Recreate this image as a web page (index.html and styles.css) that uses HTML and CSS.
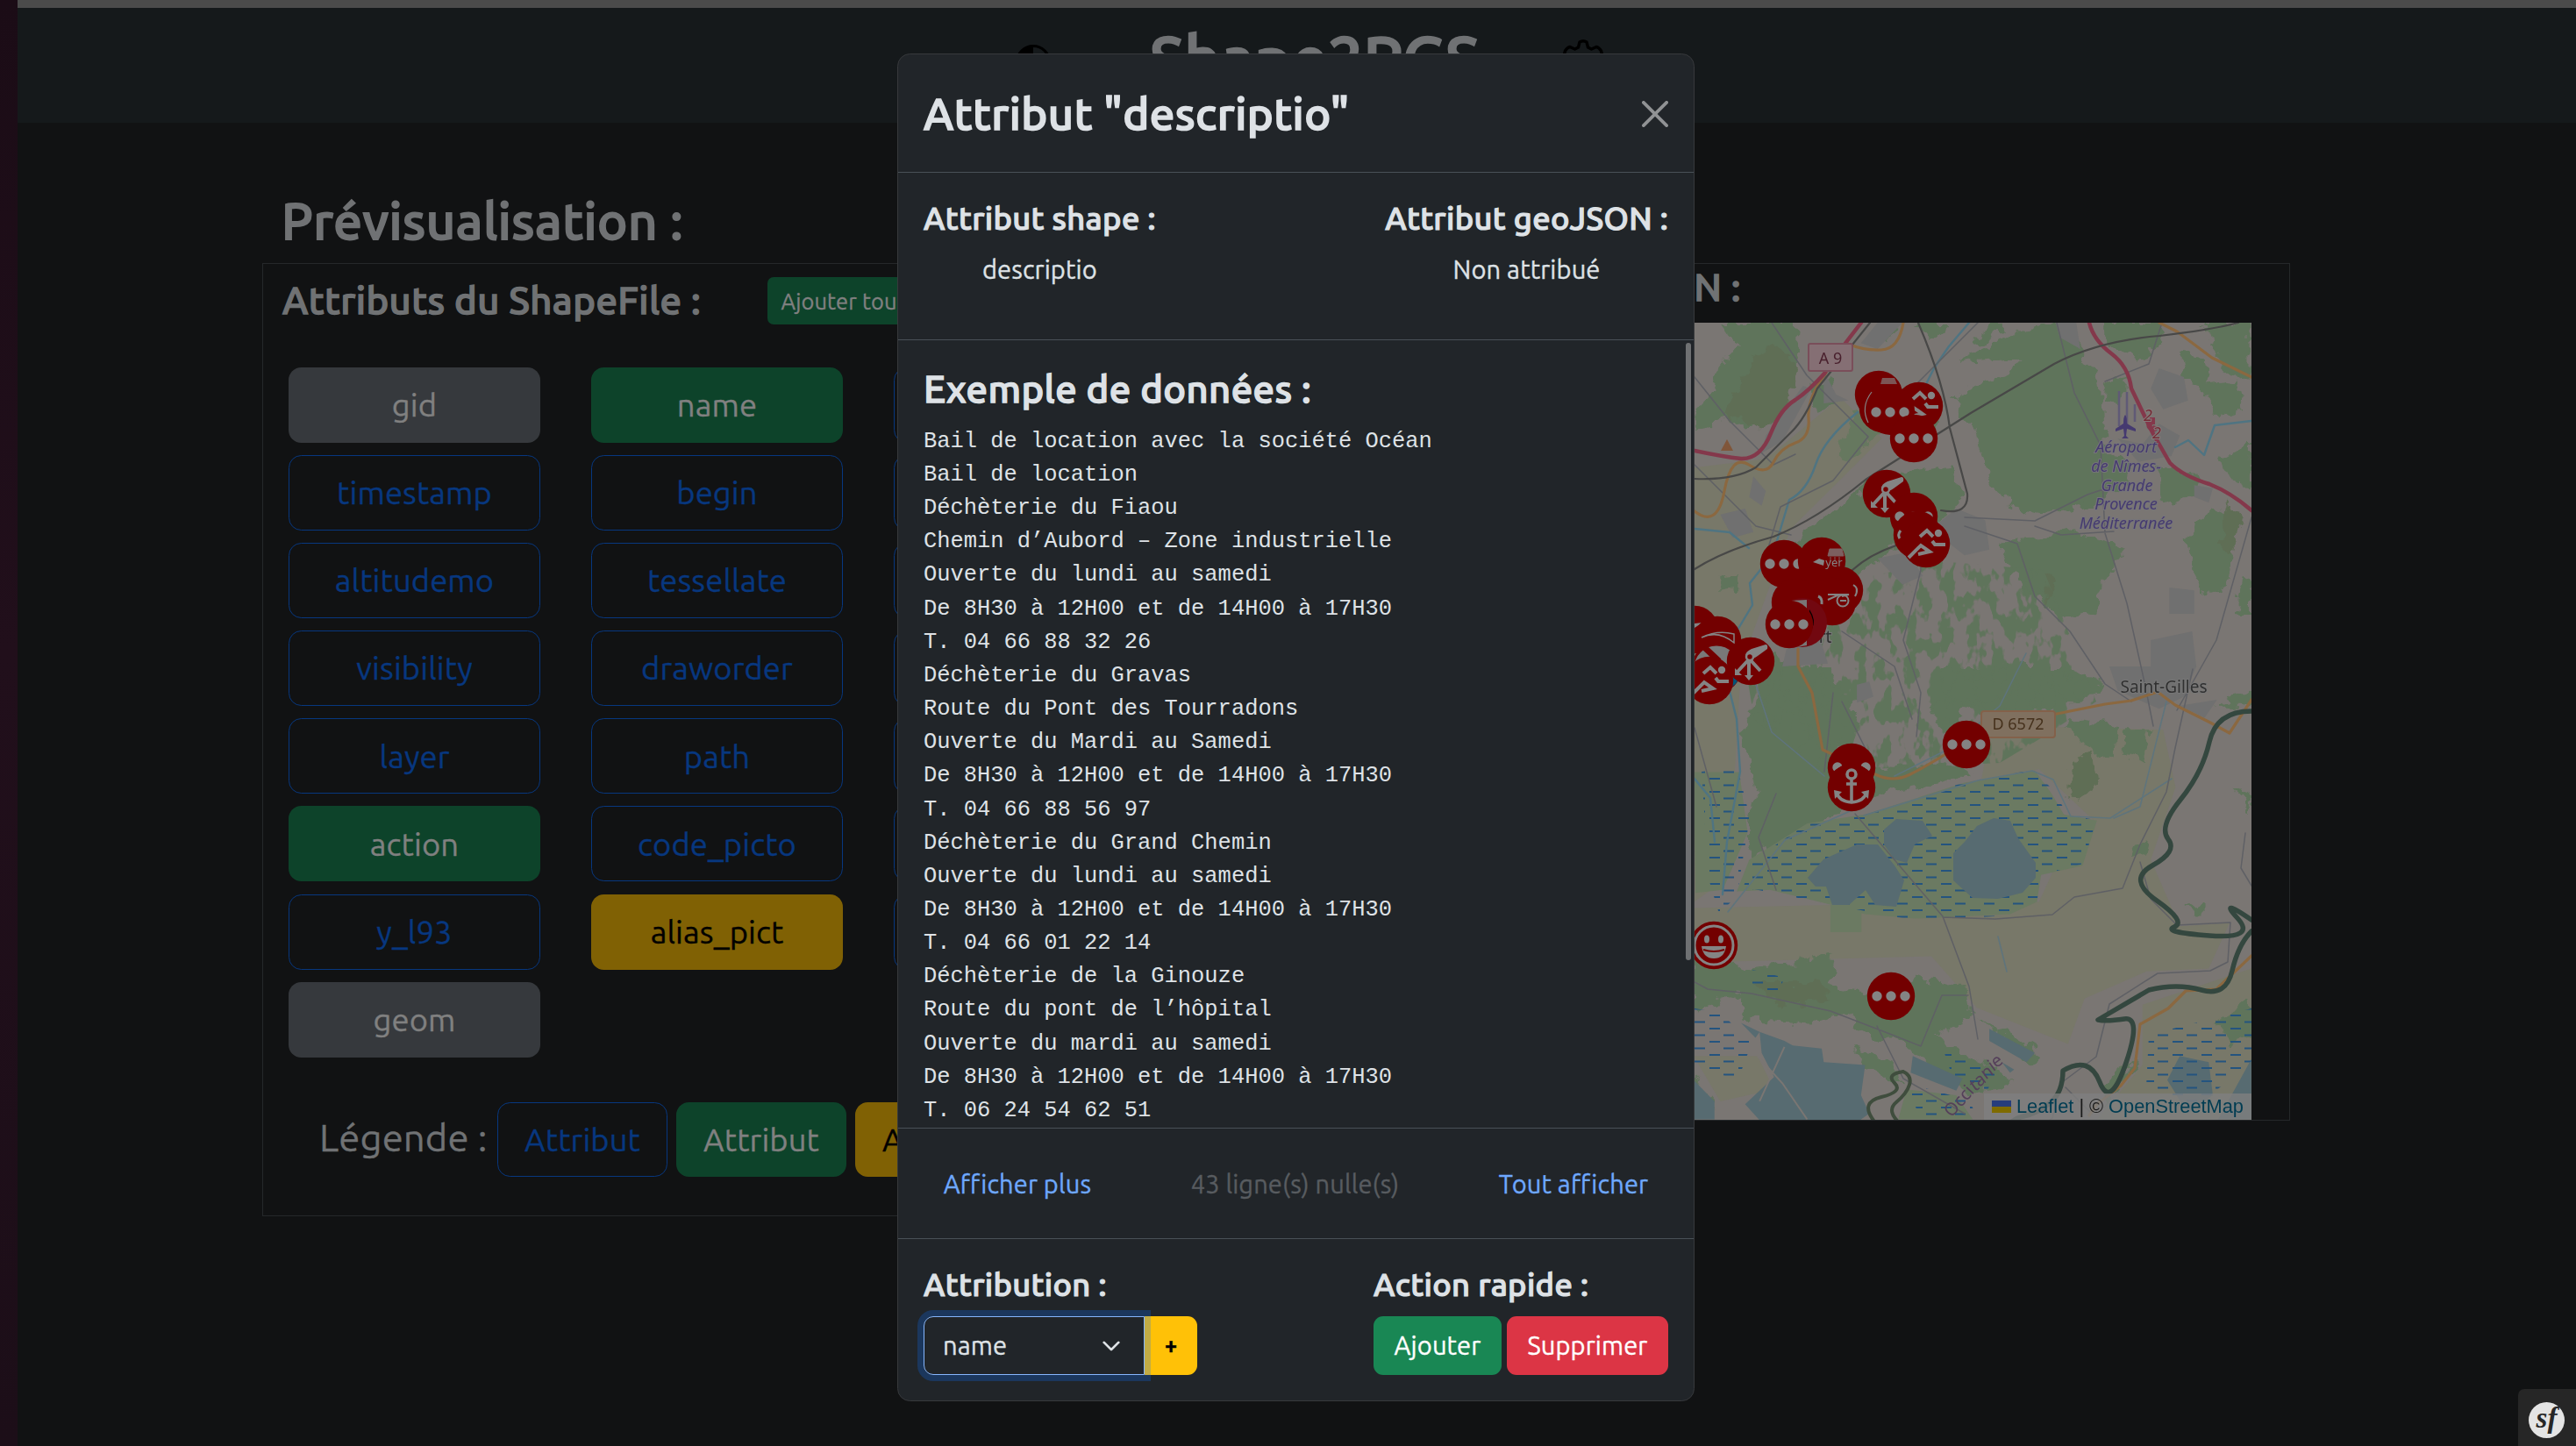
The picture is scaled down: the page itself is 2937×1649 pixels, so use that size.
FILE: index.html
```html
<!DOCTYPE html>
<html lang="fr">
<head>
<meta charset="utf-8">
<title>Shape2PGS</title>
<link rel="stylesheet" href="styles.css">
</head>
<body>
<div class="strip"></div>
<div class="app">
  <div class="topline"></div>
  <header class="header">
    <svg class="icon-theme" viewBox="0 0 40 40"><circle cx="20" cy="20" r="18.5" fill="#15191b" stroke="#000" stroke-width="3"/><path d="M20 1.500A18.500 18.500 0 0 0 20 38.500Z"/></svg>
    <h1>Shape2PGS</h1>
    <svg class="icon-gear" viewBox="0 0 48 52" fill="none" stroke="#000" stroke-width="3.400" stroke-linejoin="round"><path d="M20 3q4-2.500 8 0l1.500 6 4 2 5.500-2.500q3 .5 5.500 4.500l1 4-4.500 5v6l4.500 4.500-1 4.500q-2.500 4-5.500 4.500l-5.500-2-4 2-1.500 6q-4 2.500-8 0l-1.500-6-4-2-5.500 2q-3-.5-5.500-4.500l-1-4.500 4.500-4.500v-6l-4.500-5 1-4q2.500-4 5.500-4.500l5.500 2.500 4-2z"/><circle cx="24" cy="25" r="7"/></svg>
  </header>
  <main>
    <h2>Prévisualisation :</h2>
    <div class="columns">
      <section class="panel panel-left">
        <div class="panel-head"><h3>Attributs du ShapeFile :</h3><button class="btn btn-sm green-dim">Ajouter tous</button></div>
        <div class="grid">
          <button class="btn btn-lg gray-dim">gid</button><button class="btn btn-lg green-dim">name</button><button class="btn btn-lg outline"></button>
          <button class="btn btn-lg outline">timestamp</button><button class="btn btn-lg outline">begin</button><button class="btn btn-lg outline"></button>
          <button class="btn btn-lg outline">altitudemo</button><button class="btn btn-lg outline">tessellate</button><button class="btn btn-lg outline"></button>
          <button class="btn btn-lg outline">visibility</button><button class="btn btn-lg outline">draworder</button><button class="btn btn-lg outline"></button>
          <button class="btn btn-lg outline">layer</button><button class="btn btn-lg outline">path</button><button class="btn btn-lg outline"></button>
          <button class="btn btn-lg green-dim">action</button><button class="btn btn-lg outline">code_picto</button><button class="btn btn-lg outline"></button>
          <button class="btn btn-lg outline">y_l93</button><button class="btn btn-lg yellow-dim">alias_pict</button><button class="btn btn-lg outline"></button>
          <button class="btn btn-lg gray-dim">geom</button>
        </div>
        <div class="legend"><span>Légende :</span><button class="btn btn-lg outline">Attribut</button><button class="btn btn-lg green-dim">Attribut</button><button class="btn btn-lg yellow-dim">Attribut</button></div>
      </section>
      <section class="panel panel-right">
        <h3>GeoJSON :</h3>
        <div class="map">
          <svg viewBox="1932 368 635 909">
            <defs>
              <filter id="rough" color-interpolation-filters="sRGB" x="-5%" y="-5%" width="110%" height="110%"><feTurbulence type="fractalNoise" baseFrequency="0.060" numOctaves="3" seed="4"/><feDisplacementMap in="SourceGraphic" scale="22" xChannelSelector="R" yChannelSelector="G"/></filter>
              <filter id="speckle" color-interpolation-filters="sRGB" x="0" y="0" width="100%" height="100%"><feTurbulence type="fractalNoise" baseFrequency="0.070 0.040" numOctaves="3" seed="11"/><feColorMatrix values="0 0 0 0 .373  0 0 0 0 .455  0 0 0 0 .357  0 14 0 0 -6.900"/><feComposite in2="SourceGraphic" operator="in"/></filter>
              <pattern id="marsh" width="33" height="15" patternUnits="userSpaceOnUse"><path d="M2 3h12M18 10.500h12" stroke="#24547f" stroke-width="2.200"/></pattern>
              <g id="pin"><circle r="27.200" fill="#730000"/></g>
              <g id="dots"><circle r="27.200" fill="#730000"/><g fill="#848484"><circle cx="-16" r="5.700"/><circle r="5.700"/><circle cx="16" r="5.700"/></g></g>
              <g id="run"><circle r="27.200" fill="#730000"/><g fill="none" stroke="#848484" stroke-width="4"><path d="M-7-8l8-7 7 7M22 1H10l-3-4M-20 16L-6 2l10 7-13 3"/></g><circle cx="14" cy="-12" r="4.200" fill="#848484"/></g>
              <g id="tool"><circle r="27.200" fill="#730000"/><path d="M-6-6q0-5 7-8l16-5q3 0 2 5l-11 8q-6 5-11 2z" fill="#848484"/><circle cx="-1" cy="-5" r="4" fill="#730000" stroke="#848484" stroke-width="2.500"/><path d="M-3-1l-12 13M-2 0v18M0-1l11 12" stroke="#848484" stroke-width="4"/><path d="M-18 8v8h8zM-7 16h10l-5 6z" fill="#848484"/></g>
            </defs>
            <rect x="1932" y="368" width="635" height="909" fill="#7a7673"/>
            <g transform="translate(1900 240) scale(.47194 .33333)">
              <path fill="#787869" d="M66 880L240 850 420 640 520 780 300 1090 220 1400 180 1560H66ZM740 620L860 600 850 690 780 720ZM920 630l70-10 10 60-60 15z"/>
            </g>
            <g transform="translate(1900 760) scale(.47194 .34439)">
              <path fill="#787869" d="M66 0H180L150 700 66 780ZM780 240L940 200 1200 210 1230 400 1170 640 1240 860 1360 850 1310 1000 1160 1010 1010 1100 970 1250 750 1130 640 960 66 980V800L400 790 900 780 940 660 1040 520 900 340 760 380ZM66 1290L220 1290 260 1400 130 1440ZM1150 1120l263-120v500H1040l110-180z"/>
            </g>
            <g filter="url(#rough)" fill="#5f745b">
              <g transform="translate(1900 240) scale(.47194 .33333)">
                <path d="M130 384H290L330 450 300 560 240 700 190 750 150 700 80 760 66 690 120 610 130 540 170 470ZM520 384H560L540 450 500 440ZM600 384H690L640 450ZM700 520l90-60 90-70 70 10 70 130 30 60 10 240 60 40-10 60-70 80-140 30-70-30-50-90-30-170-60-100 50-50 90-40 20-60zM590 900L690 880 715 1000 650 1050 600 1020ZM330 1100L520 900 660 880 640 1100 560 1150 430 1270 300 1200ZM800 1140L990 1090 1060 1130 1110 1160 1060 1260 1030 1380 960 1400 920 1340 870 1310ZM1060 384h120l20 60-60 60-80-40zM1300 384h110v200l-60-30zM1240 490l60 10 10 110-60-30zM1340 850l73-60v170l-60-50zM1260 1130l60-110 60 30-20 230-60 30-30-80zM1290 600l90-20 20 100-60 20zM1070 560l40 20-10 90-40-20zM1390 1250l23 20v120l-40-10zM350 600l50-20 10 80-50 20zM130 1260l40-10v50l-40 10zM740 440l60-60 20 30-60 50zM1180 880l90 10 20 80-90 40zM560 640l90 90-10 60-60-30z"/>
                <path d="M240 610q60 20 70 60-60-10-80 80l-30-30zM450 680l60 80-60 100-40-20z" fill="#66785f"/>
              </g>
              <g transform="translate(1900 760) scale(.47194 .34439)">
                <path d="M210 0H400L440 100 470 210 400 300 480 330 700 330 740 360 500 430 390 500 290 570 215 640 190 560 215 400 180 200 225 100ZM660 0H950L1040 90 960 140 800 160 720 130 690 230 640 180ZM830 0h130l100 60-60 60-140-10zM1370 90l43-10v50h-80zM1000 170l90 20-10 90-40 20-70-100zM1110 210h60l-20 110-40-30zM1370 400l43 20v60zM1130 580l40-10-10 50-40 10zM66 960L200 1000 410 960 400 1060 480 1080 600 1030 730 1060 740 1170 620 1240 500 1230 430 1150 350 1180 190 1170 180 1080 66 1140ZM450 1260l90 50 30 70-80-40zM500 1190L650 1230 840 1370 750 1420 600 1290ZM750 1160l160 130-30 30zM1260 790l40-10v40h-30zM1330 1170l83-60v120l-60 20zM1080 1330l60-20-90 150zM66 1360l60 110-60-10z"/>
              </g>
              <g fill="#5f6e55"><path d="M2000 405l24-15 24 30-10 50-30 20-40-20zM2540 570l14 20-8 40-14-10zM2365 870l20-12 5 40-20 15-16-10zM2330 655l14 12-8 20-10-10z"/><path d="M2000 1120h70l20 20-60 10z"/></g>
            </g>
            <path filter="url(#speckle)" d="M2120 660l90-20 120 10 60 150-60 40-50 30-210 10-70-60-10-60 60-30z"/>
            <g transform="translate(1900 240) scale(.47194 .33333)" fill="#707070">
              <path d="M510 384h60l-60 90-40-20zM330 600l20 10-70 180-50 40 10-60zM380 550l30 80 30 20-60 10zM1190 540l60 30 10 80-60 30-30-70zM940 384h50l10 90-50-40zM1090 780l60 20 40-70 50 40-20 70-80 20zM700 1020l70 40 10 100-60 20-80-90zM130 1040l60-20 20 80-50 20zM210 910l30 50-10 50-30-30zM510 1190l70-20 40 80-50 30zM290 1500l80-40 20 90-110 10zM1170 1470l100-30 10 120h-110zM1275 940l45 10-10 50-35-20zM1215 1290l60 10v80h-60z"/>
            </g>
            <g transform="translate(1900 760) scale(.47194 .34439)">
              <path fill="#707070" d="M1070 0h210l-30 100-60 40-100-60zM1240 130l90-20-30 60zM460 60l30-10 10 50-40 20z"/>
              <path fill="#6b7a62" d="M480 490L720 385 890 345 930 420 960 490 1040 510 1005 660 905 690 895 780 830 820 600 835 480 820 400 790 250 740 170 745 200 640 340 520ZM396 790h75v90h-75zM66 350l110 0 20 200-60 190-66 10zM580 1400l120 20 40 80H560z"/>
              <path fill="#576b71" d="M225 1210l60 30 20 15 70 10 5 45 100 10-10 100 20 60-30 30H230L190 1450l70-90-30-80zM595 1290l120 75-15 40-110-60zM780 1200l110 80-20 30-90-70zM180 1180l45 30-10 20zM810 1310l30 25-10 10zM1210 1370l30-80 70 20 10 110-60 60zM1413 1300v200h-80zM66 1370l50 70 0 60H66z"/>
              <path d="M220 1290l60 90 60 120M285 1260l-60 180" stroke="#7a7673" stroke-width="2" fill="none" vector-effect="non-scaling-stroke"/>
            </g>
            <path fill="url(#marsh)" d="M2125 930L2240 892 2318 878 2340 900 2358 930 2390 935 2375 985 2327 998 2322 1030 2290 1044 2185 1050 2090 1032 2000 1014 1985 1018 2000 980 2060 940ZM1940 880l40-8 15 60-15 90-20 20-12-40zM1932 1150l30 5 35 35-15 40-50-10zM1995 1105l40 10-10 20-30-5zM2175 1235l70 20 20 40h-70zM2215 1195l60 30-10 20-40-20zM2450 1180l117-30v60l-60 50-60-20z"/>
            <path fill="#576b71" d="M2061 1001L2079 980 2117 963 2141 963 2160 987 2171 1004 2162 1034 2138 1032 2127 1015 2108 1032 2089 1032 2082 1011 2070 1011ZM2148 946L2162 934 2192 936 2203 953 2183 963 2174 984 2160 980 2148 963ZM2227 973L2240 960 2254 942 2273 933 2292 936 2301 956 2321 984 2321 1001 2306 1018 2278 1025 2249 1024 2227 1004Z"/>
            <g fill="none" stroke-linecap="round" stroke-linejoin="round">
              <g stroke="#4f7482" stroke-width="2.400"><path d="M2245 368L2222 395 2205 420 2195 440M2118 470Q2080 500 2070 530T2040 570L2025 620 2015 640 1995 665 1998 690 1980 720M1932 603l40 4 22 18M2480 510l15-8 18 17 12-34 42-5M1970 780l10 40 4 60-15 80-5 60M1932 888l18 22 5 50"/></g>
              <g stroke="#5f747c" stroke-width="1.600"><path d="M2125 930l130-40 62-11 24 10 20 42 45 2 70-45M2470 800l-30 120-30 13M2125 918l-90 40-65 82M2080 885l-60-50-20-60M2160 885l60-30 60-50 30-60M2278 1068l10 40"/></g>
              <g stroke="#5f6065" stroke-width="1.500"><path d="M1932 430l40 50 30 30 20 20 25-12M2020 368l40 60 60 60 10 10-40 50-60 30-15 50M2130 430l20 40 40 20M2255 368l-60 60-60 60M2345 368l20 80 30 60 5 100 25 80 20 90 10 50M2400 435l50-20 15-47M2240 590l80 4 60-30 30-10M2320 600l30 10 60-4M2240 600l60 20 20 60 40 40 40 60 30 20M2190 610l0 40-20 80 20 60-5 50M1932 530l70 70 40 10M2567 590l-40 140-45 80M2100 720l60 40 20 60M2100 800l30 60M1932 1120l15 8 50 5 90 20 65 25 38 15 24-58h30M2115 928l100 117 30 80 10 60M2215 1046l60 2 65-5 25-20 55-10 20-50 30-60 10-50 20-90M2440 983l12 42 30 30 61-3-3 45-20 10-60 3-55 35-15 60-40 30-10 40-40 30M2140 1170l30 60 70 40M2025 905l-20 50 20 60M1932 830l25 90M2560 950l-5 40 12 20M2090 790l-10 90M2355 1240l30 30"/></g>
              <g stroke="#8b6840" stroke-width="3.200"><path d="M2170 368q-5 30-25 31T2107 392M2082 425q-22 30-20 52t-15 28-25 22-28 3-28 30-34 23M2462 368l20 10 40 30 45 22M2050 740l0 20 16 30 12 65 60 28q20 10 40 0t55-32 25-13M2340 815l60-12 30-4 30-10 20 15 40 20 22 12 25-38M2567 1090l-40 38-35 2-20 20-32 18-6 50-16 20-28 22-8 12"/></g>
              <path d="M2122 368l-20 26q-12 15-22 32-18 20-33 30-17 10-28 38-12 30-34 29-20-2-53-9M2382 368q5 20 25 35t23 40l24 50 20 35q15 15 45 24 25 10 48 30" stroke="#84384b" stroke-width="4.500"/>
              <path d="M2132 368l-60 75q-14 35-30 50-20 20-40 40-25 15-70 13M1932 649q35-22 90-37 50-20 105-65l120-76 95-56q50-26 120-32 60-7 90-15M2187 368q30 70 36 120l20 75q2 25-30 19M2162 622q-30 10-50 28l-25 22" stroke="#484847" stroke-width="2.200"/>
              <path d="M2567 811q-40 0-48 35t-33 66-14 45-18 30 5 40 20 30 40 10 32-20 16 2M2567 1062q-15 15-22 45t-35 22-60 0l-58 34q10 2 30-1t2 50-30 22-42-13q0 25-15 37t-30 15-35 27l-35 7" stroke="#34473f" stroke-width="5.500"/>
              <path d="M2170 1222q10 5 7 15t-15 20 5 25M2170 1222q-20 3-10 13t-15 16-8 28" stroke="#3f4d3d" stroke-width="4"/>
            </g>
            <path fill="#80563a" d="M1962 514l7-13 7 13z"/>
            <path d="M2416 446v40m9-39v39m9-25v20" stroke="#605a76" stroke-width="2.500"/>
            <path fill="#453a70" d="M2423 473q2 2 2 10l10 6v3l-10-3-1 8 3 3h-8l3-3-1-8-9 3v-3l9-6q0-8 2-10z"/>
            <path d="M2454 481q-6 3-2 7t6-2M2454 476v8" stroke="#84384b" stroke-width="6" fill="none"/>
            <g class="map-small"><text x="2449" y="480">2</text><text x="2459" y="500">2</text></g>
            <g class="airport"><text x="2424" y="516">Aéroport</text><text x="2424" y="538">de Nîmes-</text><text x="2425" y="560">Grande</text><text x="2424" y="581">Provence</text><text x="2424" y="603">Méditerranée</text></g>
            <rect x="2062" y="392" width="50" height="31" rx="2" fill="#856f74" stroke="#7a4e5a" stroke-width="2"/>
            <text class="road-a" x="2087" y="415">A 9</text>
            <rect x="2259" y="811" width="84" height="30" rx="3" fill="#80705f" stroke="#83614a" stroke-width="2"/>
            <text class="road-d" x="2301" y="832">D 6572</text>
            <text class="town" x="2467" y="790">Saint-Gilles</text>
            <text class="town" x="2081" y="733">rt</text>
            <text class="region" transform="translate(2225 1275) rotate(-48)">Occi<tspan rotate="12">tanie</tspan></text>
            <use href="#pin" x="2142" y="450"/><path d="M2144 438l2-7h14l3 7z" fill="#7c5555"/><use href="#pin" x="2147" y="466"/><use href="#run" x="2188" y="463"/><circle cx="2155" cy="468" r="28" fill="#730000"/><path d="M2134 447q-13 17-4 35" fill="none" stroke="#848484" stroke-width="1.200"/><g fill="#848484"><circle cx="2139" cy="470" r="5.700"/><circle cx="2155" cy="470" r="5.700"/><circle cx="2171" cy="470" r="5.700"/></g>
            <use href="#dots" x="2182" y="500"/>
            <use href="#tool" x="2151" y="563"/><use href="#dots" x="2182" y="589"/><circle cx="2186" cy="610" r="27.200" fill="#730000"/><path d="M2167 605q-4 5-1 9" stroke="#848484" stroke-width="3" fill="none"/><use href="#run" x="2196" y="620"/>
            <use href="#dots" x="2034" y="643"/><use href="#pin" x="2077" y="640"/><path d="M2086 626h14l2 8h-18zM2087 635v5m5-5v5m5-5v5" fill="#7c6060" stroke="#7c6060"/><path d="M2067 641l7-4 6 2-1 6z" fill="#848484"/><text class="pin-text" x="2091" y="646">yer</text>
            <circle cx="2062" cy="678" r="31" fill="#730000"/><use href="#pin" x="2097" y="673"/><use href="#pin" x="2089" y="686"/><path d="M2113 667q7 4 2 13M2084 678h24l-8 2M2084 684l13-6" stroke="#848484" stroke-width="2" fill="none"/><circle cx="2101" cy="685" r="6.500" fill="none" stroke="#848484" stroke-width="2"/><path d="M2098 685h7" stroke="#848484" stroke-width="2"/>
            <use href="#pin" x="2047" y="687"/><circle cx="2055" cy="710" r="28" fill="#720810"/><path d="M2060 684v52l-18 3v-54z" fill="#797676"/><path d="M2063 695q8 12 3 22l-5 2z" fill="#000"/><path d="M2073 680q5 2 4 9" stroke="#848484" stroke-width="3"/><use href="#dots" x="2040" y="712"/>
            <use href="#pin" x="1932" y="718"/><path d="M1932 711l9-1-9 6z" fill="#848484"/><use href="#pin" x="1958" y="730"/><path d="M1940 727q18-9 37-4v10q-18-15-37-6" stroke="#848484" stroke-width="1.500" fill="none"/><circle cx="1957" cy="762" r="27" fill="#797979" stroke="#730000" stroke-width="3"/><path d="M1976 768l8-3q0 12-9 18z" fill="#005478"/><path d="M1943 738l17 16" stroke="#730000" stroke-width="7"/><use href="#tool" x="1996" y="754"/><use href="#run" x="1949" y="776"/>
            <use href="#dots" x="2242" y="849"/>
            <use href="#dots" x="2111" y="875"/><path d="M2100 868h22v20h-22z" fill="#730000"/><use href="#pin" x="2111" y="898"/><g fill="none" stroke="#848484" stroke-width="3.600"><circle cx="2111" cy="883" r="5"/><path d="M2111 888v27M2105 894h12M2094 904q3 10 17 11 14-1 17-11"/></g><path d="M2091 901l9 2-8 8zM2131 901l-9 2 8 8zM2092 878q-1-6 4-7l4 2zM2130 878q1-6-4-7l-4 2z" fill="#848484"/>
            <use href="#pin" x="1954" y="1078"/><circle cx="1954" cy="1078" r="22" fill="none" stroke="#848484" stroke-width="3"/><path d="M1940 1079h28q-2 14-14 14t-14-14z" fill="#848484"/><path d="M1942 1083q12 4 24 0" stroke="#730000" stroke-width="2" fill="none"/><g fill="#848484"><ellipse cx="1946" cy="1071" rx="3" ry="4.500"/><ellipse cx="1962" cy="1071" rx="3" ry="4.500"/></g>
            <use href="#dots" x="2156" y="1136"/>
          </svg>
          <div class="attribution"><i class="flag"></i><a>Leaflet</a><span>|</span><span>©</span><a>OpenStreetMap</a></div>
        </div>
      </section>
    </div>
  </main>
</div>

<div class="modal">
  <div class="modal-header"><h4>Attribut "descriptio"</h4><svg class="close" viewBox="0 0 16 16" fill="#909294"><path d="M.293.293a1 1 0 0 1 1.414 0L8 6.586 14.293.293a1 1 0 1 1 1.414 1.414L9.414 8l6.293 6.293a1 1 0 0 1-1.414 1.414L8 9.414l-6.293 6.293a1 1 0 0 1-1.414-1.414L6.586 8 .293 1.707a1 1 0 0 1 0-1.414z"/></svg></div>
  <div class="modal-row names">
    <div><h5>Attribut shape :</h5><p>descriptio</p></div>
    <div><h5>Attribut geoJSON :</h5><p>Non attribué</p></div>
  </div>
  <div class="modal-data">
    <h3>Exemple de données :</h3>
<pre>Bail de location avec la société Océan
Bail de location
Déchèterie du Fiaou
Chemin d’Aubord – Zone industrielle
Ouverte du lundi au samedi
De 8H30 à 12H00 et de 14H00 à 17H30
T. 04 66 88 32 26
Déchèterie du Gravas
Route du Pont des Tourradons
Ouverte du Mardi au Samedi
De 8H30 à 12H00 et de 14H00 à 17H30
T. 04 66 88 56 97
Déchèterie du Grand Chemin
Ouverte du lundi au samedi
De 8H30 à 12H00 et de 14H00 à 17H30
T. 04 66 01 22 14
Déchèterie de la Ginouze
Route du pont de l’hôpital
Ouverte du mardi au samedi
De 8H30 à 12H00 et de 14H00 à 17H30
T. 06 24 54 62 51</pre>
    <div class="thumb"></div>
  </div>
  <div class="modal-row more"><button class="btn link">Afficher plus</button><span>43 ligne(s) nulle(s)</span><button class="btn link">Tout afficher</button></div>
  <div class="modal-row actions">
    <div><h5>Attribution :</h5><div class="group"><div class="select"><span>name</span><svg viewBox="0 0 16 16" fill="none" stroke="#dee2e6" stroke-width="2" stroke-linecap="round" stroke-linejoin="round"><path d="m2 5 6 6 6-6"/></svg></div><button class="btn plus">+</button></div></div>
    <div><h5>Action rapide :</h5><div class="group spaced"><button class="btn green">Ajouter</button><button class="btn red">Supprimer</button></div></div>
  </div>
</div>
<div class="toolbar"><div class="sf">sf</div></div>
</body>
</html>
```
FILE: styles.css
```css
* { box-sizing: border-box; }
html, body { margin: 0; height: 1649px; overflow: hidden; }
body { position: relative; display: flex; background: #111213; color: #707274; font: 400 29.07px/1.5 Ubuntu, "Noto Sans", sans-serif; letter-spacing: .004em; -webkit-text-stroke: .012em; }
svg, .attribution, pre { -webkit-text-stroke: 0; letter-spacing: 0; }
h1, h2, h3, h4, h5, p, pre { margin: 0; }
h1, h2, h3, h4, h5 { font-weight: 500; line-height: 1.2; letter-spacing: .009em; -webkit-text-stroke: .032em; }
.strip { width: 20px; background: linear-gradient(#1b0c16, #210f1b 45%, #1c0e18); }
.app { flex: 1; }
.topline { height: 9px; background: #4b4b4b; }
.header { height: 131px; background: #15191b; display: flex; align-items: flex-start; padding: 15px 0 0 1138px; }
h1 { font-size: 72.67px; width: 373px; margin: 0 97px 0 113px; white-space: nowrap; letter-spacing: -.002em; }
.icon-theme { width: 40px; height: 40px; margin-top: 27px; }
.icon-gear { width: 48px; height: 52px; margin-top: 21px; }
main { padding: 77px 325px 0 279px; }
h2 { font-size: 58.13px; padding-left: 22px; }
h3 { font-size: 43.6px; }
.columns { display: flex; align-items: flex-start; margin-top: 13px; }
.panel { width: 1156px; border: 1px solid #25282a; }
.panel-left { height: 1087px; padding: 15px 22px 0; }
.panel-head { display: flex; height: 103px; align-items: flex-start; }
.panel-head h3 { width: 553px; }
.btn { border: 1px solid transparent; border-radius: 11px; padding: 10.9px 21.8px; font: inherit; letter-spacing: inherit; color: inherit; background: none; white-space: nowrap; }
.btn-sm { font-size: 25.43px; padding: 8px 14.5px 6.5px; height: 54px; border-radius: 7px; line-height: 38px; }
.btn-lg { font-size: 36.33px; padding: 15px 29px 14px; border-radius: 14.5px; height: 86px; }
.green-dim { background: #0d432a; color: #808080; }
.gray-dim { background: #36393d; color: #808080; }
.yellow-dim { background: #806104; color: #000; }
.outline { border-color: #07377f; color: #07377f; }
.grid { display: grid; grid-template-columns: repeat(3, 287px); grid-auto-rows: 86px; gap: 14.15px 58px; margin-left: 7px; }
.legend { display: flex; align-items: center; margin: 51px 0 0 42px; gap: 10px; }
.legend span { font-size: 43.6px; margin-top: -6px; width: 193px; white-space: nowrap; }
.legend .btn { width: 194px; height: 85px; }
.panel-right { height: 978px; padding-right: 43px; display: flex; flex-direction: column; align-items: flex-end; }
.panel-right h3 { height: 67px; padding-right: 582px; }
.map { position: relative; width: 635px; height: 909px; }
.map svg { display: block; width: 635px; height: 909px; }
.map-small, .airport { font: italic 18px "Noto Sans", sans-serif; }
.map-small { fill: #742b35; stroke: #857b7b; stroke-width: 2px; paint-order: stroke; text-anchor: middle; }
.airport { fill: #453a70; stroke: #76757a; stroke-width: 2px; paint-order: stroke; text-anchor: middle; }
.road-a { font: 18px "Noto Sans", sans-serif; fill: #49202d; text-anchor: middle; }
.road-d { font: 18px "Noto Sans", sans-serif; fill: #45311c; text-anchor: middle; }
.town { font: 19px "Noto Sans", sans-serif; fill: #303030; stroke: #777; stroke-width: 2px; paint-order: stroke; text-anchor: middle; }
.region { font: 20px "Noto Sans", sans-serif; fill: #55405a; }
.pin-text { font: 13px "Noto Sans", sans-serif; fill: #848484; text-anchor: middle; }
.attribution { position: absolute; right: 0; bottom: 0; height: 30px; padding: 0 9px; display: flex; align-items: center; gap: 6px; background: rgba(128,128,128,.8); font: 21.8px/30px "Liberation Sans", sans-serif; color: #1a1a1a; }
.attribution a { color: #003c52; }
.flag { width: 22px; height: 14px; background: linear-gradient(#263d7c 50%, #7f6b00 50%); }

.modal { position: absolute; left: 1023px; top: 61px; width: 909px; height: 1537px; background: #212529; border: 1px solid #37393c; border-radius: 14.5px; color: #dee2e6; display: flex; flex-direction: column; }
.modal-header { height: 135px; padding: 2px 29px 0; display: flex; align-items: center; justify-content: space-between; border-bottom: 1px solid #495057; }
h4 { font-size: 50.87px; }
.close { width: 30px; height: 30px; }
h5 { font-size: 36.33px; margin-bottom: 14.5px; }
.modal-row { padding: 30px 29px 28px; display: flex; justify-content: space-between; border-bottom: 1px solid #495057; }
.names { height: 191px; text-align: center; }
.names p { padding-top: 1px; }
.modal-data { position: relative; height: 899px; padding: 29px; border-bottom: 1px solid #495057; }
pre { font: 25.43px/38.15px "Liberation Mono", monospace; margin-top: 15.5px; }
.thumb { position: absolute; right: 3px; top: 3px; width: 6px; height: 704px; border-radius: 3px; background: #6f7173; }
.more { height: 126px; align-items: center; }
.more span { color: #585c60; }
.link { color: #6ea8fe; }
.actions { border-bottom: 0; }
.group { display: flex; height: 67px; }
.spaced { gap: 6px; }
.select { position: relative; z-index: 1; width: 252px; border: 1px solid #86b7fe; border-radius: 11px 0 0 11px; box-shadow: 0 0 0 7px rgba(13,110,253,.25); display: flex; align-items: center; justify-content: space-between; padding: 0 26px 0 21px; }
.select svg { width: 22px; height: 22px; }
.plus { background: #ffc107; color: #000; font-size: 25px; font-weight: 700; padding: 0; width: 60px; border-radius: 0 11px 11px 0; }
.green { background: #198754; color: #fff; }
.red { background: #dc3545; color: #fff; }
.green, .red { padding-left: 22.5px; padding-right: 22.5px; }
.toolbar { position: absolute; right: 0; bottom: 0; width: 66px; height: 65px; background: #262626; border-radius: 7px 0 0 0; padding: 15px 0 0 12px; }
.sf { width: 41px; height: 41px; border-radius: 50%; background: #e4e4e4; color: #262626; font: italic 700 33px/36px "Liberation Serif", serif; text-align: center; -webkit-text-stroke: 0; }
```
